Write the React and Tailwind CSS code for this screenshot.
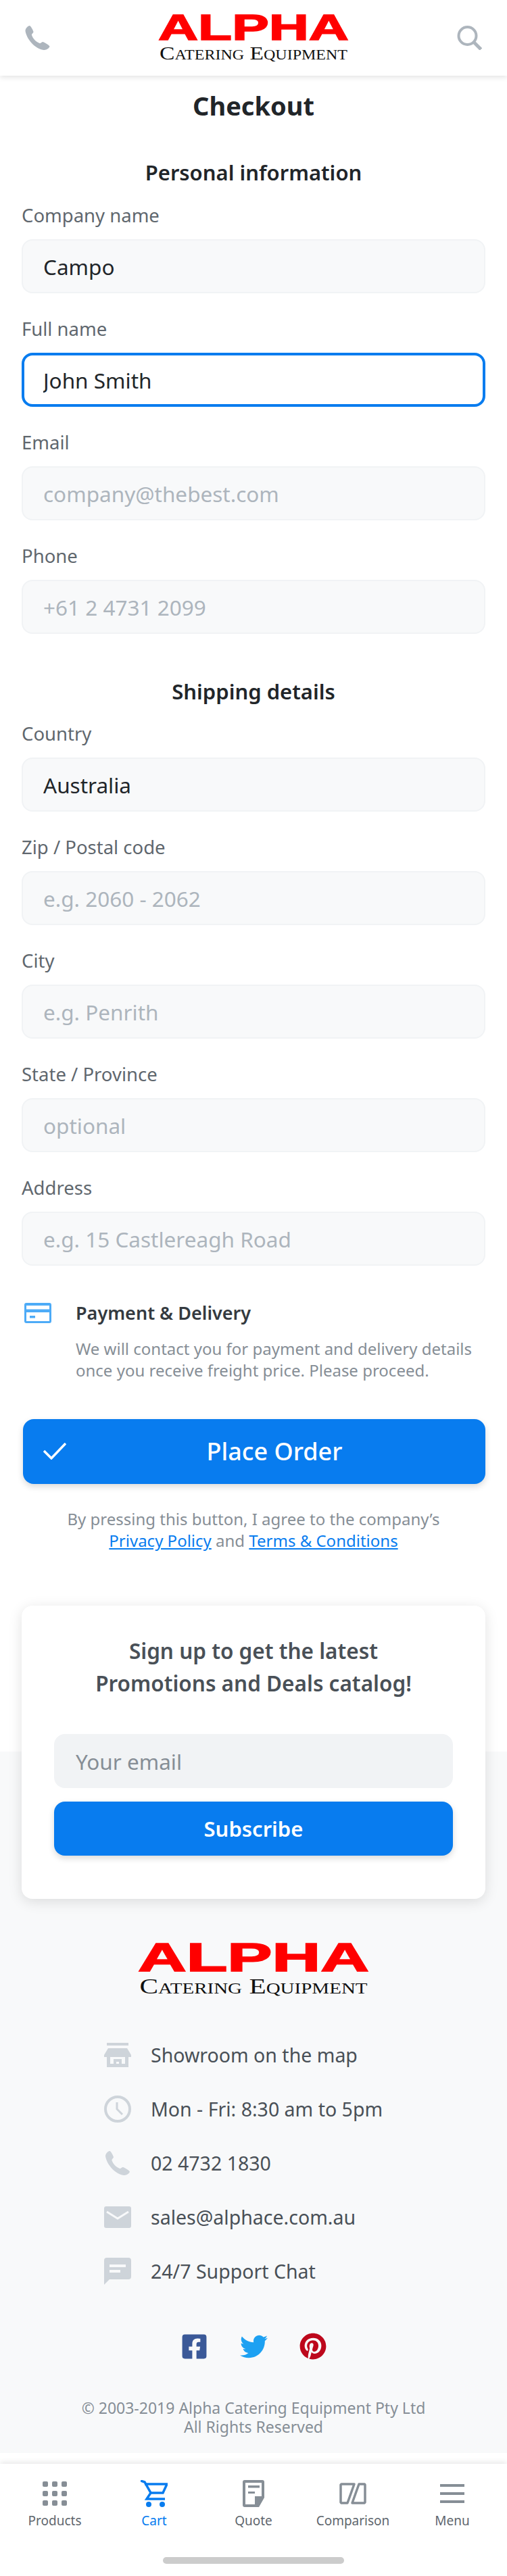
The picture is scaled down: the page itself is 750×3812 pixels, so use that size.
import { FaFacebookSquare, FaTwitter, FaPinterest } from "react-icons/fa";

const personal = [
  { label: "Company name", value: "Campo" },
  { label: "Full name", value: "John Smith", focus: true },
  { label: "Email", placeholder: "company@thebest.com" },
  { label: "Phone", placeholder: "+61 2 4731 2099" },
];

const shipping = [
  { label: "Country", value: "Australia" },
  { label: "Zip / Postal code", placeholder: "e.g. 2060 - 2062" },
  { label: "City", placeholder: "e.g. Penrith" },
  { label: "State / Province", placeholder: "optional" },
  { label: "Address", placeholder: "e.g. 15 Castlereagh Road" },
];

function Logo({ className }) {
  return (
    <svg viewBox="0 -12 282 96" preserveAspectRatio="none" className={className}>
      <text
        x="0"
        y="39"
        fill="#ff0000"
        stroke="#ff0000"
        strokeWidth="1.5"
        fontFamily="'Liberation Sans', sans-serif"
        fontWeight="700"
        fontSize="53"
        textLength="282"
        lengthAdjust="spacingAndGlyphs"
      >
        ALPHA
      </text>
      <text
        x="2"
        y="68"
        fill="#111111"
        fontFamily="'Liberation Serif', serif"
        fontSize="28"
        textLength="278"
        lengthAdjust="spacingAndGlyphs"
        style={{ fontVariant: "small-caps" }}
      >
        Catering Equipment
      </text>
    </svg>
  );
}

function PhoneIcon({ className }) {
  return (
    <svg viewBox="0 0 36 36" className={className} fill="currentColor">
      <path d="M6 0C8 0 11 6 12 9C12 11 9 12 9.5 14C11 19 16 24 21 26C23 26.500 24 24 26 24C29 25 36 29 36 31C34 35 30 36 27 36C14 34 2 20 0 8C0 4 3 1 6 0Z" />
    </svg>
  );
}

function Field({ label, value, placeholder, focus }) {
  return (
    <div>
      <label className="block text-[27.500px] leading-[32px] text-[#5f676e]">{label}</label>
      <input
        readOnly
        defaultValue={value}
        placeholder={placeholder}
        className={
          focus
            ? "mt-[19px] block w-full h-[80px] px-[28px] rounded-[16px] border-[4px] border-[#087cef] bg-white text-[31.500px] text-[#212529] outline-none"
            : "mt-[19px] block w-full h-[80px] px-[30px] rounded-[16px] border-2 border-[#f1f3f5] bg-[#f8f9fa] text-[31.500px] text-[#212529] placeholder:text-[#adb5bd] outline-none"
        }
      />
    </div>
  );
}

function NavItem({ label, active, children }) {
  return (
    <div className="flex-1 flex flex-col items-center">
      <div className="h-[40px] flex items-center justify-center">{children}</div>
      <span className={active ? "mt-[8px] text-[19px] leading-[24px] text-[#087cef]" : "mt-[8px] text-[19px] leading-[24px] text-[#5f676e]"}>
        {label}
      </span>
    </div>
  );
}

export default function App() {
  return (
    <div className="w-[750px] bg-white font-['Noto_Sans',sans-serif]">
      {/* Header */}
      <header className="h-[112px] px-[37px] flex items-center justify-between shadow-[0_2px_8px_rgba(0,0,0,0.12)]">
        <PhoneIcon className="w-[37px] h-[36px] text-[#adb5bd]" />
        <Logo className="w-[282px] h-[96px]" />
        <svg viewBox="0 0 36 36" className="w-[37px] h-[36px]" fill="none" stroke="#adb5bd">
          <circle cx="15" cy="15" r="13" strokeWidth="4" />
          <path d="M24 24L35 35" strokeWidth="5" />
        </svg>
      </header>

      <main className="px-[32px]">
        <h1 className="mt-[24px] text-center text-[38px] leading-[40px] font-bold text-[#212529]">Checkout</h1>

        <h2 className="mt-[59px] text-center text-[31px] leading-[40px] font-semibold text-[#212529]">Personal information</h2>
        <div className="mt-[28px] flex flex-col gap-[37px]">
          {personal.map((f) => (
            <Field key={f.label} {...f} />
          ))}
        </div>

        <h2 className="mt-[65px] text-center text-[31px] leading-[40px] font-semibold text-[#212529]">Shipping details</h2>
        <div className="mt-[27px] flex flex-col gap-[37px]">
          {shipping.map((f) => (
            <Field key={f.label} {...f} />
          ))}
        </div>

        {/* Payment note */}
        <div className="mt-[54px] flex items-start">
          <svg viewBox="0 0 40 30" className="ml-[4px] w-[40px] h-[32px] shrink-0">
            <rect width="40" height="30" rx="3" fill="#4dabf7" />
            <rect x="3" y="4" width="34" height="5.500" fill="#fff" />
            <rect x="3" y="14" width="34" height="13" fill="#fff" />
            <rect x="8" y="19" width="8" height="3.500" fill="#4dabf7" />
          </svg>
          <div className="ml-[36px]">
            <p className="text-[27px] leading-[32px] font-semibold text-[#343a40]">Payment &amp; Delivery</p>
            <p className="mt-[21px] text-[24px] leading-[32px] text-[#868e96]">
              We will contact you for payment and delivery details
              <br />
              once you receive freight price. Please proceed.
            </p>
          </div>
        </div>

        <button className="mt-[56px] ml-[2px] relative block w-[684px] h-[96px] rounded-[16px] bg-[#087cef] text-white text-[36px] font-medium shadow-[0_4px_10px_rgba(0,0,0,0.15)]">
          <svg viewBox="0 0 34 25" className="absolute left-[30px] top-[35px] w-[34px] h-[25px]" fill="none" stroke="#fff" strokeWidth="3.500">
            <path d="M1 12L12 23L33 1" />
          </svg>
          <span className="ml-[60px]">Place Order</span>
        </button>

        <p className="mt-[36px] text-center text-[24px] leading-[32px] text-[#868e96]">
          By pressing this button, I agree to the company’s
          <br />
          <a className="text-[#087cef] underline">Privacy Policy</a> and <a className="text-[#087cef] underline">Terms &amp; Conditions</a>
        </p>

        {/* Newsletter card */}
        <div className="relative z-10 mt-[80px] h-[434px] px-[48px] pt-[43px] rounded-[16px] bg-white shadow-[0_4px_20px_rgba(0,0,0,0.12)]">
          <p className="text-center text-[31.500px] leading-[48px] font-semibold text-[#495057]">
            Sign up to get the latest
            <br />
            Promotions and Deals catalog!
          </p>
          <input
            readOnly
            placeholder="Your email"
            className="mt-[51px] block w-full h-[80px] px-[32px] rounded-[16px] bg-[#f1f3f5] text-[31.500px] placeholder:text-[#868e96] outline-none"
          />
          <button className="mt-[20px] w-full h-[80px] rounded-[16px] bg-[#087cef] text-white text-[31px] font-semibold shadow-[0_4px_10px_rgba(0,0,0,0.15)]">
            Subscribe
          </button>
        </div>
      </main>

      {/* Footer */}
      <footer className="-mt-[218px] pt-[268px] pb-[25px] bg-[#f8f9fa]">
        <Logo className="mx-auto w-[342px] h-[108px]" />

        <div className="mt-[33px] pl-[154px] text-[28.500px] text-[#495057]">
          <div className="h-[80px] flex items-center gap-[29px]">
            <svg viewBox="0 0 40 36" className="w-[40px] h-[36px] text-[#ced4da]" fill="currentColor">
              <rect x="4" width="32" height="4" />
              <path fillRule="evenodd" d="M6 8H34L40 18V21H36V36H4V21H0V18ZM9 21V31H14V24H26V31H31V21ZM18 28V31H22V28Z" />
            </svg>
            <span>Showroom on the map</span>
          </div>
          <div className="h-[80px] flex items-center gap-[29px]">
            <svg viewBox="0 0 40 40" className="w-[40px] h-[40px]" fill="none" stroke="#ced4da">
              <circle cx="20" cy="20" r="18" strokeWidth="4" />
              <path d="M19 10V20L27 28" strokeWidth="3" />
            </svg>
            <span>Mon - Fri: 8:30 am to 5pm</span>
          </div>
          <div className="h-[80px] flex items-center gap-[29px]">
            <PhoneIcon className="w-[40px] h-[36px] text-[#ced4da]" />
            <span>02 4732 1830</span>
          </div>
          <div className="h-[80px] flex items-center gap-[29px]">
            <svg viewBox="0 0 40 32" className="w-[40px] h-[32px]">
              <rect width="40" height="32" rx="3" fill="#ced4da" />
              <path d="M4 8L20 18L36 8" fill="none" stroke="#f8f9fa" strokeWidth="3" />
            </svg>
            <span>sales@alphace.com.au</span>
          </div>
          <div className="h-[80px] flex items-center gap-[29px]">
            <svg viewBox="0 0 40 40" className="w-[40px] h-[40px]">
              <path d="M4 0H36A4 4 0 0 1 40 4V28A4 4 0 0 1 36 32H8L0 40V4A4 4 0 0 1 4 0Z" fill="#ced4da" />
              <rect x="8" y="10" width="24" height="4" fill="#f8f9fa" />
              <rect x="8" y="18" width="16" height="4" fill="#f8f9fa" />
            </svg>
            <span>24/7 Support Chat</span>
          </div>
        </div>

        <div className="mt-[51px] h-[40px] flex justify-center items-center">
          <div className="w-[88px] flex justify-center"><FaFacebookSquare className="w-[41px] h-[41px] text-[#3b5998]" /></div>
          <div className="w-[88px] flex justify-center"><FaTwitter className="w-[41px] h-[41px] text-[#1da1f2]" /></div>
          <div className="w-[88px] flex justify-center"><FaPinterest className="w-[40px] h-[40px] text-[#bd081c]" /></div>
        </div>

        <p className="mt-[57px] text-center text-[23px] leading-[28px] text-[#868e96]">
          © 2003-2019 Alpha Catering Equipment Pty Ltd
          <br />
          All Rights Reserved
        </p>
      </footer>

      {/* Bottom nav */}
      <nav className="mt-[16px] h-[166px] pt-[24px] shadow-[0_-2px_8px_rgba(0,0,0,0.1)]">
        <div className="px-[7.500px] flex">
          <NavItem label="Products">
            <div className="grid grid-cols-3 gap-[6px]">
              {[0, 1, 2, 3, 4, 5, 6, 7, 8].map((i) => (
                <div key={i} className="w-[8px] h-[8px] rounded-[2px] bg-[#868e96]" />
              ))}
            </div>
          </NavItem>
          <NavItem label="Cart" active>
            <svg viewBox="0 0 40 40" className="w-[40px] h-[40px]" fill="none" stroke="#087cef" strokeWidth="3.500">
              <path d="M0 1L6 3L15 19L9 28H36" />
              <path d="M6 6H39L33 19H15" />
              <circle cx="12" cy="36" r="4" fill="#087cef" stroke="none" />
              <circle cx="32" cy="36" r="4" fill="#087cef" stroke="none" />
            </svg>
          </NavItem>
          <NavItem label="Quote">
            <svg viewBox="0 0 32 40" className="w-[32px] h-[40px]" fill="#868e96">
              <path fillRule="evenodd" d="M3 0H29A3 3 0 0 1 32 3V26L24 40H3A3 3 0 0 1 0 37V3A3 3 0 0 1 3 0ZM4 4V36H18V24H28V4Z" />
              <rect x="8" y="8" width="17" height="3.500" />
              <rect x="8" y="17" width="10" height="3" />
            </svg>
          </NavItem>
          <NavItem label="Comparison">
            <svg viewBox="0 0 40 32" className="w-[40px] h-[32px]" fill="none" stroke="#868e96" strokeWidth="3.500" strokeLinejoin="round">
              <path d="M3 2H22L12 30H3A1.500 1.500 0 0 1 2 29V3Z" />
              <path d="M29 2H37A1.500 1.500 0 0 1 38 3V29A1.500 1.500 0 0 1 37 30H19Z" />
            </svg>
          </NavItem>
          <NavItem label="Menu">
            <div className="w-[36px] flex flex-col gap-[8px]">
              <div className="h-[4px] bg-[#868e96]" />
              <div className="h-[4px] bg-[#868e96]" />
              <div className="h-[4px] bg-[#868e96]" />
            </div>
          </NavItem>
        </div>
        <div className="mt-[42px] mx-auto w-[268px] h-[10px] rounded-full bg-[#cccccc]" />
      </nav>
    </div>
  );
}
